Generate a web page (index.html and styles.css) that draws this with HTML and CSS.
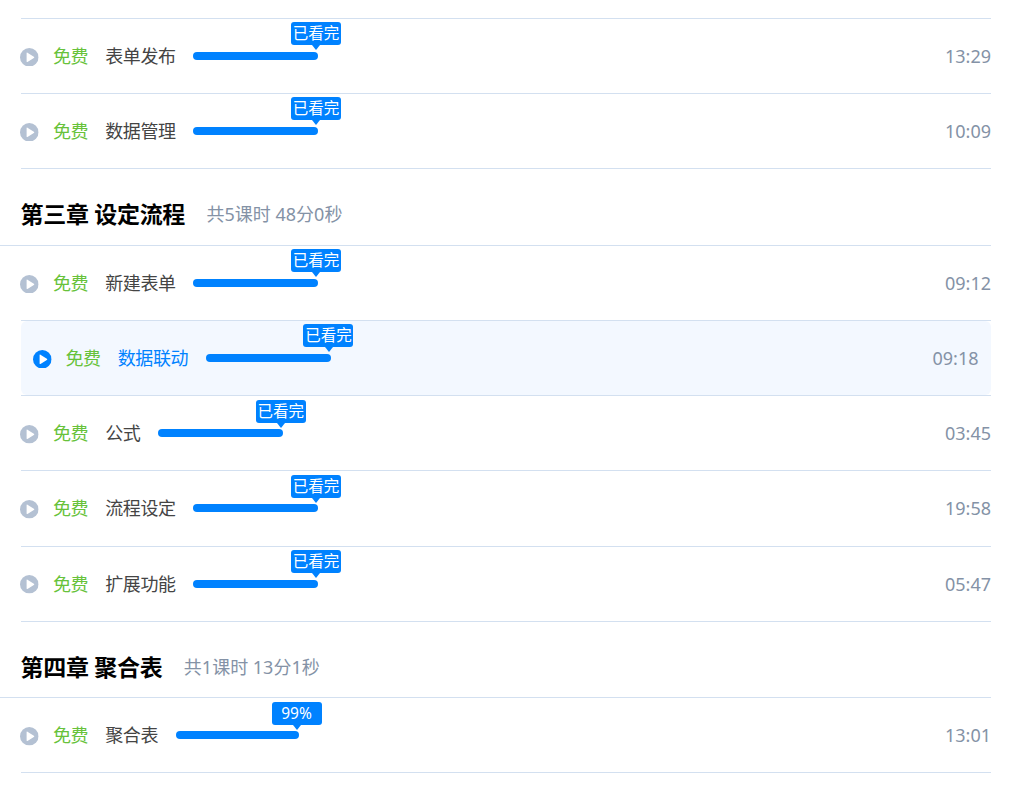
FILE: index.html
```html
<!DOCTYPE html>
<html lang="zh-CN">
<head>
<meta charset="utf-8">
<title>课程目录</title>
<link rel="stylesheet" href="styles.css">
</head>
<body>
<svg class="sprite" width="0" height="0"><symbol id="play" viewBox="0 0 18 18"><circle cx="9" cy="9" r="9" fill="currentColor"/><path d="M6.4 4.9v8.2a.5.5 0 0 0 .8.4l6.2-3.9a.7.7 0 0 0 0-1.2L7.2 4.5a.5.5 0 0 0-.8.4z" fill="#fff"/></symbol></svg>
<main class="page">
<ul class="list first">
<li class="row"><div class="inner"><svg class="icon"><use href="#play"/></svg><span class="free">免费</span><span class="name">表单发布</span><div class="progress"><div class="fill" style="width:125px"><span class="tip">已看完</span></div></div><span class="time">13:29</span></div></li>
<li class="row"><div class="inner"><svg class="icon"><use href="#play"/></svg><span class="free">免费</span><span class="name">数据管理</span><div class="progress"><div class="fill" style="width:125px"><span class="tip">已看完</span></div></div><span class="time">10:09</span></div></li>
</ul>
<header class="chapter"><h2>第三章 设定流程</h2><span class="meta">共5课时 48分0秒</span></header>
<ul class="list">
<li class="row"><div class="inner"><svg class="icon"><use href="#play"/></svg><span class="free">免费</span><span class="name">新建表单</span><div class="progress"><div class="fill" style="width:125px"><span class="tip">已看完</span></div></div><span class="time">09:12</span></div></li>
<li class="row active"><div class="inner"><svg class="icon"><use href="#play"/></svg><span class="free">免费</span><span class="name">数据联动</span><div class="progress"><div class="fill" style="width:125px"><span class="tip">已看完</span></div></div><span class="time">09:18</span></div></li>
<li class="row"><div class="inner"><svg class="icon"><use href="#play"/></svg><span class="free">免费</span><span class="name">公式</span><div class="progress"><div class="fill" style="width:125px"><span class="tip">已看完</span></div></div><span class="time">03:45</span></div></li>
<li class="row"><div class="inner"><svg class="icon"><use href="#play"/></svg><span class="free">免费</span><span class="name">流程设定</span><div class="progress"><div class="fill" style="width:125px"><span class="tip">已看完</span></div></div><span class="time">19:58</span></div></li>
<li class="row"><div class="inner"><svg class="icon"><use href="#play"/></svg><span class="free">免费</span><span class="name">扩展功能</span><div class="progress"><div class="fill" style="width:125px"><span class="tip">已看完</span></div></div><span class="time">05:47</span></div></li>
</ul>
<header class="chapter"><h2>第四章 聚合表</h2><span class="meta">共1课时 13分1秒</span></header>
<ul class="list">
<li class="row"><div class="inner"><svg class="icon"><use href="#play"/></svg><span class="free">免费</span><span class="name">聚合表</span><div class="progress"><div class="fill" style="width:123.2px"><span class="tip">99%</span></div></div><span class="time">13:01</span></div></li>
</ul>
</main>
</body>
</html>
```
FILE: styles.css
```css
* { box-sizing: border-box; }
html, body { margin: 0; padding: 0; background: #fff; }
body {
  font-family: "Noto Sans", "Noto Sans CJK SC", sans-serif;
  font-size: 18px;
  line-height: 24px;
  color: #444;
  height: 787px;
  overflow: hidden;
}
.sprite { display: block; height: 0; }
.page { width: 991px; padding-top: 17.8px; }
.list { list-style: none; margin: 0 0 0 21px; padding: 0; }
.list.first { border-top: 1px solid #d3e0f0; }
.chapter {
  height: 76.6px;
  padding: 15px 0 0 20.6px;
  display: flex;
  align-items: center;
  gap: 21.5px;
  border-bottom: 1px solid #d3e0f0;
}
.chapter h2 { margin: 0; font-size: 23px; letter-spacing: -0.32px; line-height: 30px; font-weight: 700; color: #000; }
.meta { color: #8492a6; }
.row {
  height: 75.2px;
  border-bottom: 1px solid #d3e0f0;
}
.inner { height: 100%; display: flex; align-items: center; }
.active .inner { padding: 0 12.5px; background: #f3f8ff; border-radius: 6px; }
.active .icon { color: #0082ff; }
.active .name { color: #0082ff; }
.icon { width: 18.6px; height: 18.6px; color: #b4c1d3; flex: none; margin: 2px 0 0 -0.6px; }
.free { margin-left: 14px; color: #67c23a; letter-spacing: -0.4px; }
.name { margin-left: 17px; letter-spacing: -0.4px; }
.progress { margin-left: 17.5px; width: 125px; height: 8px; }
.fill { position: relative; height: 8px; background: #0082ff; border-radius: 4px; }
.tip {
  position: absolute;
  right: -22.85px;
  top: -29.7px;
  width: 50px;
  height: 23px;
  border-radius: 3px;
  background: #0082ff;
  color: #fff;
  font-size: 15.5px;
  line-height: 23px;
  text-align: center;
}
.tip::after {
  content: "";
  position: absolute;
  left: 21.5px;
  top: 23px;
  border: 4.5px solid transparent;
  border-top-width: 5px;
  border-top-color: #0082ff;
  border-bottom: 0;
}
.time { margin-left: auto; color: #8492a6; }
```
